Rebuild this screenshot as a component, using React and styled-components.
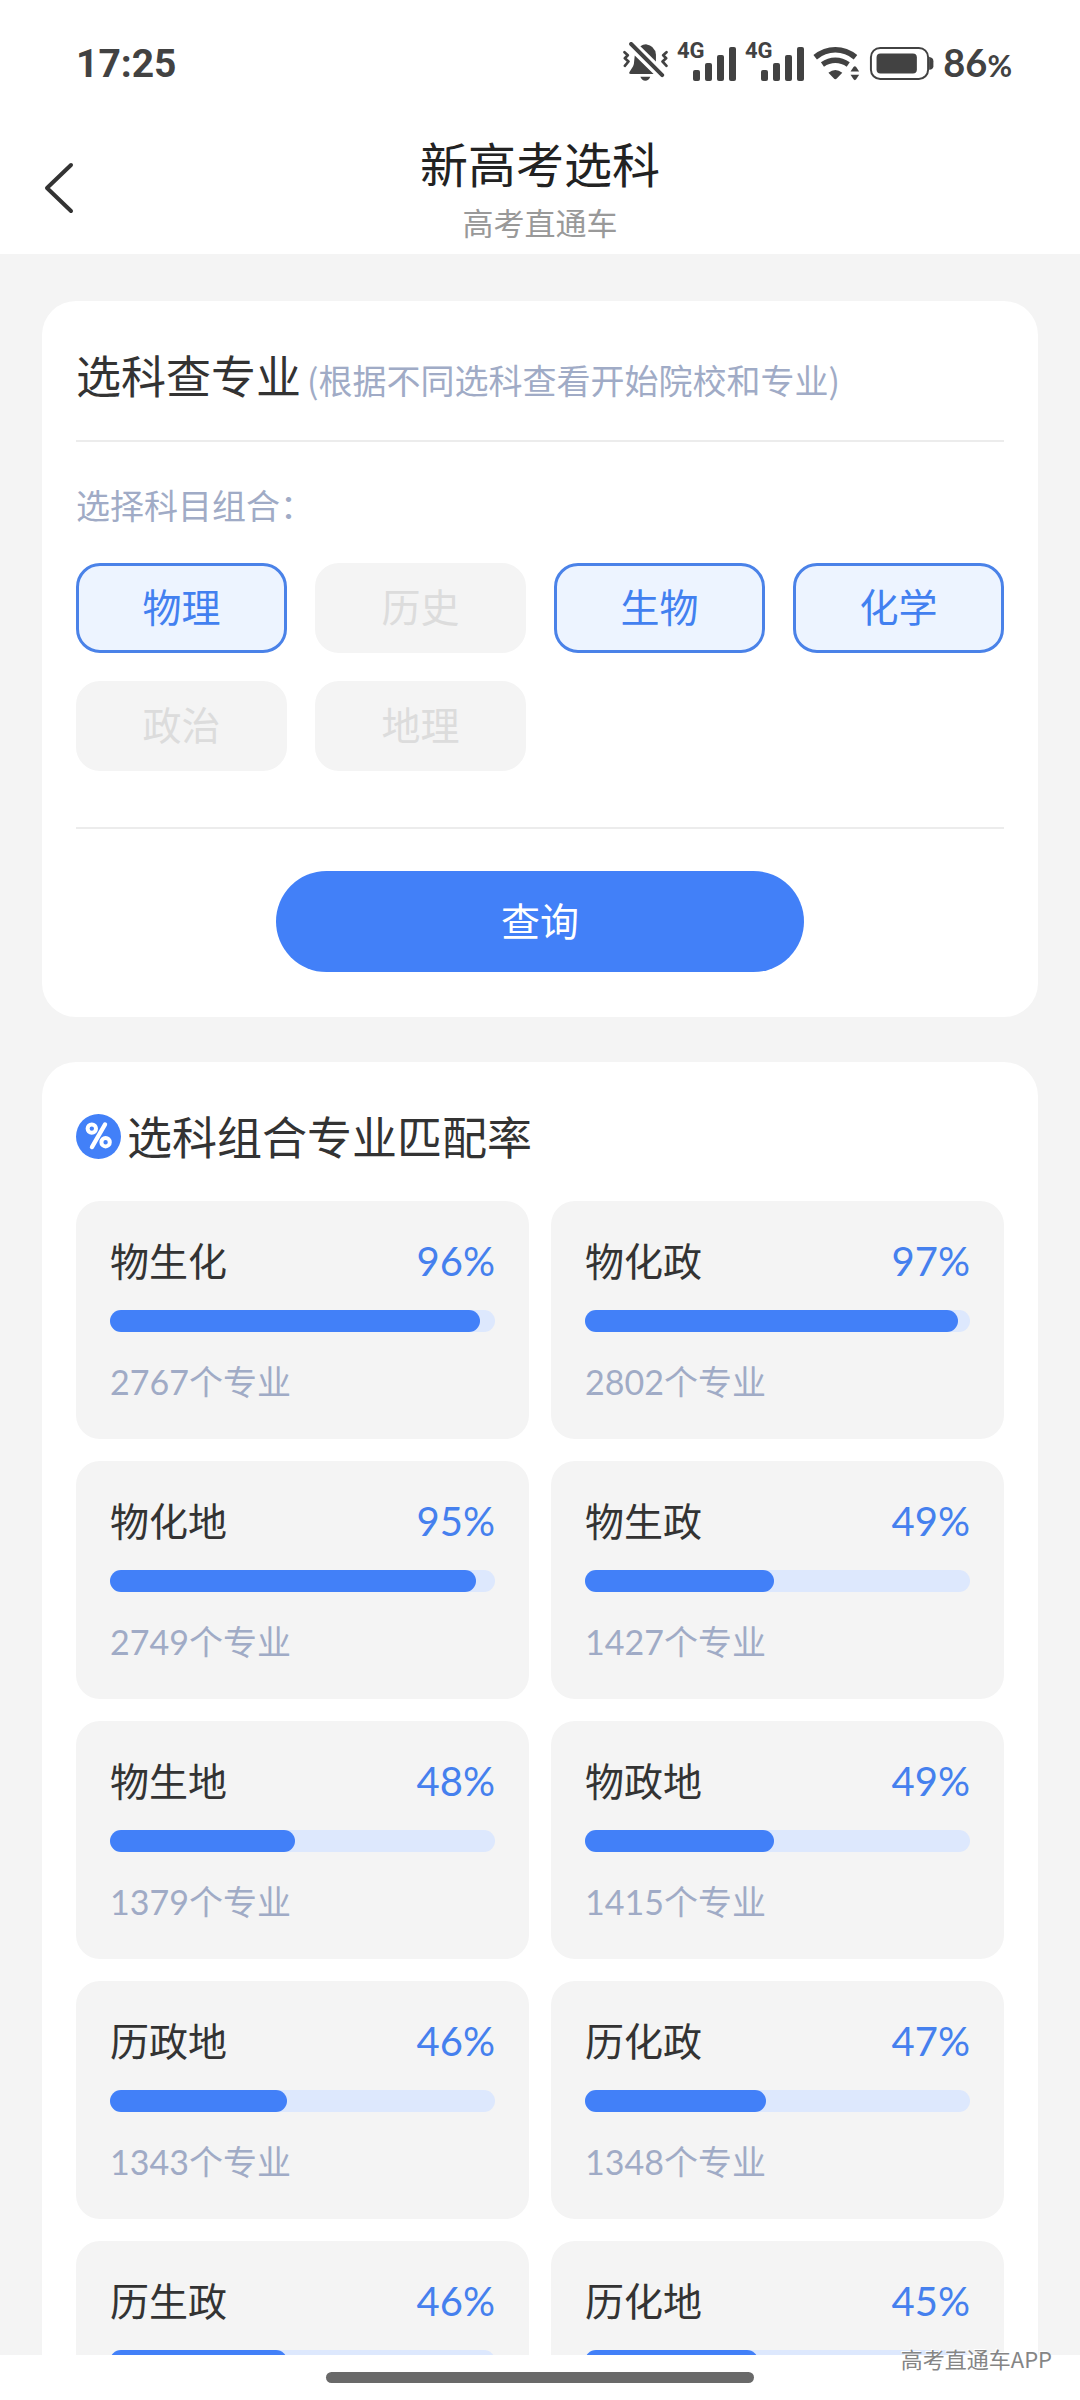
import React, { useState } from 'react'
import styled, { createGlobalStyle } from 'styled-components'

const GlobalStyle = createGlobalStyle`
  * {
    box-sizing: border-box;
  }
  body {
    margin: 0;
    background: #f4f4f4;
    font-family: "Noto Sans CJK SC", sans-serif;
    color: #333333;
  }
  button {
    font-family: inherit;
    padding: 0;
    border: none;
    cursor: pointer;
  }
`

const Page = styled.div`
  position: relative;
  height: 100vh;
  display: flex;
  flex-direction: column;
  overflow: hidden;
`

const Header = styled.header`
  flex: none;
  background: #ffffff;
`

const StatusBar = styled.div`
  height: 122px;
  padding: 0 68px 0 76px;
  display: flex;
  align-items: center;
  justify-content: space-between;
  color: #424242;
`

const Time = styled.span`
  padding-top: 6px;
  font-family: Roboto, sans-serif;
  font-size: 39px;
  font-weight: 700;
  line-height: 48px;
`

const StatusIcons = styled.div`
  display: flex;
  align-items: center;
  gap: 9px;

  svg {
    display: block;
    fill: currentColor;
  }
`

const Battery = styled.span`
  padding-top: 4px;
  font-family: Lato, sans-serif;
  font-size: 38px;
  font-weight: 700;
  line-height: 48px;

  small {
    font-size: 30px;
  }
`

const Nav = styled.nav`
  display: grid;
  grid-template-columns: 1fr auto 1fr;
  align-items: center;
  padding: 10px 42px;
`

const BackButton = styled.button`
  justify-self: start;
  background: none;
  color: #333333;

  svg {
    display: block;
  }
`

const Titles = styled.div`
  text-align: center;
`

const Title = styled.h1`
  margin: 0 0 8px;
  font-size: 48px;
  font-weight: 400;
  line-height: 60px;
  color: #222222;
`

const SubTitle = styled.p`
  margin: 0;
  font-size: 31px;
  line-height: 44px;
  color: #999999;
`

const Main = styled.main`
  flex: 1;
  min-height: 0;
  overflow-y: auto;
  scrollbar-width: none;
  padding: 47px 42px 0;
  display: flex;
  flex-direction: column;
  gap: 45px;
`

const Card = styled.section`
  flex: none;
  background: #ffffff;
  border-radius: 34px;
  padding: 45px 34px;
`

const CardHead = styled.div`
  display: flex;
  align-items: ${props => props.$align || 'center'};
  gap: 6px;
  margin-bottom: 36px;
`

const CardTitle = styled.h2`
  margin: 0;
  font-size: 45px;
  font-weight: 400;
  line-height: 58px;
`

const Hint = styled.span`
  font-size: 34px;
  line-height: 44px;
  color: #a0abc6;
`

const Divider = styled.hr`
  margin: 0;
  border: none;
  height: 2px;
  background: #ececec;
`

const Label = styled.p`
  margin: 41px 0 36px;
  font-size: 34px;
  line-height: 44px;
  color: #a0abc6;
`

const Subjects = styled.div`
  display: grid;
  grid-template-columns: repeat(4, 1fr);
  gap: 28px;
  margin-bottom: 56px;
`

const Subject = styled.button`
  height: 90px;
  padding-bottom: 6px;
  border-radius: 24px;
  font-size: 39px;
  line-height: 48px;
  background: ${props => (props.$active ? '#edf4ff' : '#f4f4f4')};
  color: ${props => (props.$active ? '#4280f0' : '#dcdcdc')};
  border: 3px solid ${props => (props.$active ? '#4a82e8' : '#f4f4f4')};
`

const QueryButton = styled.button`
  display: block;
  width: 57%;
  height: 101px;
  margin: 42px auto 0;
  padding-bottom: 6px;
  border-radius: 51px;
  background: #4280f8;
  color: #ffffff;
  font-size: 39px;
  line-height: 48px;
`

const RateGrid = styled.div`
  display: grid;
  grid-template-columns: 1fr 1fr;
  gap: 22px;
`

const RateBox = styled.article`
  background: #f4f4f4;
  border-radius: 24px;
  padding: 34px 34px 35px;
`

const RateHead = styled.div`
  display: flex;
  justify-content: space-between;
  align-items: center;
  margin-bottom: 27px;
`

const RateName = styled.h3`
  margin: 0;
  font-size: 39px;
  font-weight: 400;
  line-height: 48px;
`

const RateValue = styled.span`
  padding-top: 4px;
  font-family: Lato, sans-serif;
  font-size: 40px;
  line-height: 44px;
  color: #4580ee;
`

const Track = styled.div`
  height: 22px;
  border-radius: 11px;
  background: #dde8fd;
`

const Fill = styled.div`
  height: 100%;
  border-radius: 11px;
  background: #4280f8;
`

const Count = styled.p`
  margin: 28px 0 0;
  font-family: Lato, "Noto Sans CJK SC", sans-serif;
  font-size: 34px;
  line-height: 44px;
  color: #a0abc6;
`

const Footer = styled.footer`
  flex: none;
  height: 45px;
  padding-top: 17px;
  background: #ffffff;
`

const HomeBar = styled.div`
  width: 428px;
  height: 11px;
  margin: 0 auto;
  border-radius: 6px;
  background: #696969;
`

const Watermark = styled.span`
  position: absolute;
  right: 28px;
  bottom: 26px;
  font-size: 22px;
  line-height: 32px;
  color: #858585;
  text-shadow: -1px -1px 0 #ffffff;
`

const subjects = ['物理', '历史', '生物', '化学', '政治', '地理']

const rates = [
  { name: '物生化', rate: 96, count: 2767 },
  { name: '物化政', rate: 97, count: 2802 },
  { name: '物化地', rate: 95, count: 2749 },
  { name: '物生政', rate: 49, count: 1427 },
  { name: '物生地', rate: 48, count: 1379 },
  { name: '物政地', rate: 49, count: 1415 },
  { name: '历政地', rate: 46, count: 1343 },
  { name: '历化政', rate: 47, count: 1348 },
  { name: '历生政', rate: 46 },
  { name: '历化地', rate: 45 },
]

const MuteIcon = () => (
  <svg width="45" height="39" viewBox="66 66 135 118">
    <path d="M101 107 L158 163 H89 Q81 162 86 155 L96 139 Q99 134 99 126 Z" />
    <path d="M118 79 Q126 73 135 73 Q162 77 165 104 V125 Z" />
    <path d="M118 171 H148 Q143 183 133 183 Q123 183 118 171 Z" />
    <g fill="none" stroke="currentColor" strokeLinecap="round" strokeLinejoin="round">
      <path d="M90 72 L184 166" strokeWidth="12" />
      <path d="M70 97 L80 106 L71 115 L82 125 L71 138" strokeWidth="8" />
      <path d="M197 97 L187 106 L196 115 L185 125 L197 138" strokeWidth="8" />
    </g>
  </svg>
)

const SignalIcon = () => (
  <svg width="59" height="51" viewBox="0 -6 59 51">
    <text x="0" y="16" fontFamily="Roboto, sans-serif" fontSize="22" fontWeight="700">4G</text>
    <rect x="16" y="28" width="7" height="11" rx="2" />
    <rect x="28" y="21" width="7" height="18" rx="2" />
    <rect x="40" y="13" width="7" height="26" rx="2" />
    <rect x="52" y="5" width="7" height="34" rx="2" />
  </svg>
)

const WifiIcon = () => (
  <svg width="47" height="39" viewBox="635 64 141 118">
    <g fill="none" stroke="currentColor">
      <path d="M641 110 C678 80 726 80 763 110" strokeWidth="17" />
      <path d="M663 132 C687 115 717 115 741 132" strokeWidth="16" />
    </g>
    <path d="M681 157 Q702 141 723 157 L707 174 Q702 180 697 174 Z" />
    <path d="M748 153 L757 140 Q761 135 765 140 L774 153 Z" />
    <path d="M748 163 L757 177 Q761 182 765 177 L774 163 Z" />
  </svg>
)

const BatteryIcon = () => (
  <svg width="65" height="39" viewBox="806 64 195 118">
    <rect x="811" y="82" width="173" height="94" rx="28" fill="none" stroke="currentColor" strokeWidth="6" />
    <rect x="828" y="99" width="122" height="60" rx="12" />
    <path d="M987 109 Q1000 112 1000 122 V137 Q1000 146 987 148 Z" />
  </svg>
)

const BackIcon = () => (
  <svg width="34" height="54" viewBox="0 0 34 54" fill="none" stroke="currentColor" strokeWidth="4" strokeLinecap="round" strokeLinejoin="round">
    <path d="M29 4 L5 27 L29 50" />
  </svg>
)

const PercentIcon = () => (
  <svg width="45" height="45" viewBox="0 0 45 45" fill="none" stroke="#ffffff">
    <circle cx="22.5" cy="22.5" r="22.5" fill="#4280f8" stroke="none" />
    <circle cx="15.8" cy="14.6" r="4.2" strokeWidth="4" />
    <circle cx="29.6" cy="28.2" r="4.2" strokeWidth="4" />
    <path d="M29 10.5 L16 33" strokeWidth="4.4" strokeLinecap="round" />
  </svg>
)

const RateItem = ({ name, rate, count }) => (
  <RateBox>
    <RateHead>
      <RateName>{name}</RateName>
      <RateValue>{rate}%</RateValue>
    </RateHead>
    <Track>
      <Fill style={{ width: `${rate}%` }} />
    </Track>
    {count && <Count>{count}个专业</Count>}
  </RateBox>
)

const App = () => {
  const [selected, setSelected] = useState(['物理', '生物', '化学'])

  const toggle = (name) => {
    setSelected(selected.includes(name)
      ? selected.filter(item => item !== name)
      : [...selected, name])
  }

  return (
    <Page>
      <GlobalStyle />
      <Header>
        <StatusBar>
          <Time>17:25</Time>
          <StatusIcons>
            <MuteIcon />
            <SignalIcon />
            <SignalIcon />
            <WifiIcon />
            <BatteryIcon />
            <Battery>86<small>%</small></Battery>
          </StatusIcons>
        </StatusBar>
        <Nav>
          <BackButton aria-label="返回">
            <BackIcon />
          </BackButton>
          <Titles>
            <Title>新高考选科</Title>
            <SubTitle>高考直通车</SubTitle>
          </Titles>
        </Nav>
      </Header>

      <Main>
        <Card>
          <CardHead $align="baseline">
            <CardTitle>选科查专业</CardTitle>
            <Hint>(根据不同选科查看开始院校和专业)</Hint>
          </CardHead>
          <Divider />
          <Label id="subjects-label">选择科目组合：</Label>
          <Subjects role="group" aria-labelledby="subjects-label">
            {subjects.map(name => (
              <Subject
                key={name}
                type="button"
                $active={selected.includes(name)}
                aria-pressed={selected.includes(name)}
                onClick={() => toggle(name)}
              >
                {name}
              </Subject>
            ))}
          </Subjects>
          <Divider />
          <QueryButton type="button">查询</QueryButton>
        </Card>

        <Card>
          <CardHead>
            <PercentIcon />
            <CardTitle>选科组合专业匹配率</CardTitle>
          </CardHead>
          <RateGrid>
            {rates.map(item => (
              <RateItem key={item.name} {...item} />
            ))}
          </RateGrid>
        </Card>
      </Main>

      <Footer>
        <HomeBar />
      </Footer>
      <Watermark>高考直通车APP</Watermark>
    </Page>
  )
}

export default App
